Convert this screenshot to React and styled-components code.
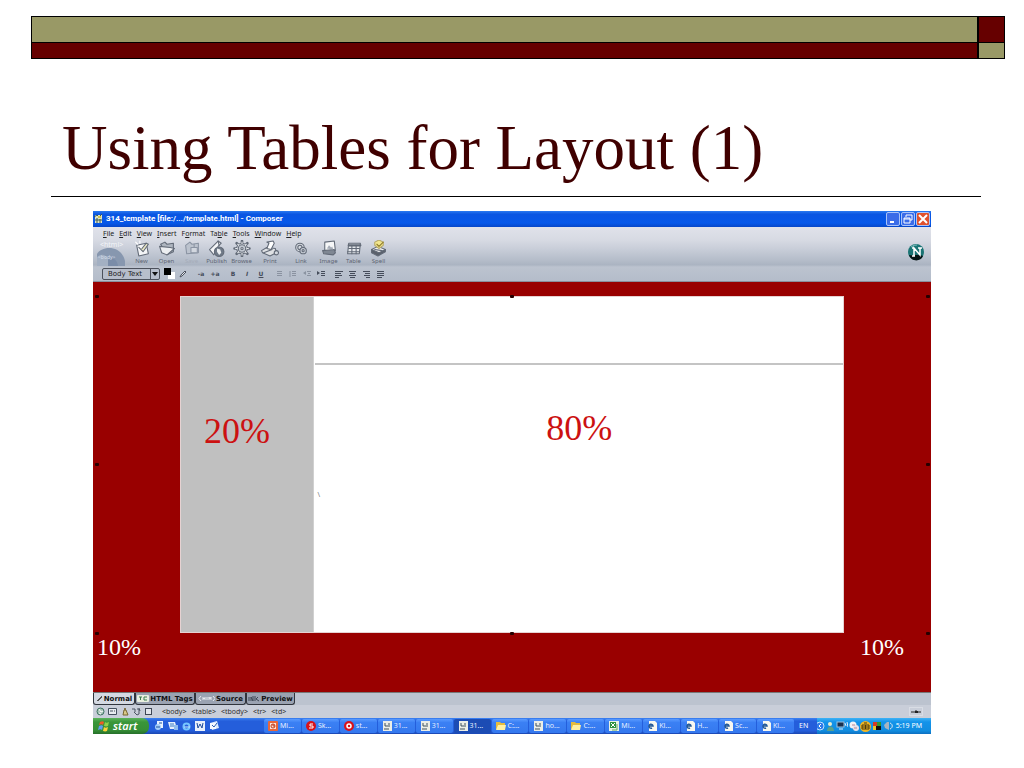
import React from "react";
import styled, { createGlobalStyle, css } from "styled-components";

const serif = '"Liberation Serif", "Times New Roman", serif';
const ui = '"Noto Sans", Tahoma, sans-serif';
const wide = '"DejaVu Sans", Verdana, sans-serif';

const Global = createGlobalStyle`
  * { box-sizing: border-box; }
  body { margin: 0; background: #fff; font-family: ${ui}; }
  button, select { margin: 0; padding: 0; border: 0; background: none; font: inherit; color: inherit; }
`;

const Slide = styled.main`
  padding: 16px 0 34px;
`;

const Banner = styled.div`
  display: grid;
  grid-template-columns: 1fr 25px;
  grid-template-rows: 25px 15px;
  gap: 1px 2px;
  margin: 0 19px 0 31px;
  padding: 1px;
  background: #000;
`;

const Swatch = styled.div`
  background: ${(p) => (p.$olive ? "#999966" : "#660000")};
`;

const Title = styled.h1`
  margin: 0 43px 0 51px;
  padding: 52px 11px 11px;
  border-bottom: 1px solid #000;
  font: 400 63px/74px ${serif};
  color: #400000;
  white-space: nowrap;
`;

const Composer = styled.section`
  margin: 14px 93px 0;
  overflow: hidden;
`;

const TitleBar = styled.header`
  display: flex;
  align-items: center;
  height: 16px;
  padding: 0 1px;
  gap: 3px;
  background: linear-gradient(#2a7af0, #0a55e2 20%, #0558ea 75%, #0646c8);
  color: #fff;
`;

const WindowTitle = styled.h2`
  flex: 1;
  margin: 0;
  font: 700 8px/14px Roboto, ${ui};
  white-space: nowrap;
`;

const WinButton = styled.button`
  display: grid;
  place-items: center;
  width: 14px;
  height: 14px;
  margin-left: -2px;
  border: 1px solid #a9c3f8;
  border-radius: 2px;
  background: ${(p) => (p.$close ? "#e0512c" : "#3b6ce8")};
`;

const Chrome = styled.div`
  background: linear-gradient(#e0e2ea, #d7dae3 24%, #c9ced9 40%, #b4bcc9 62%, #abb4c2 70%, #bcc3cf 74%, #b4bcca 100%);
  border-bottom: 1px solid #8a8f9c;
`;

const MenuBar = styled.nav`
  display: flex;
  align-items: center;
  gap: 5px;
  height: 13px;
  padding-left: 10px;
  color: #222;
`;

const MenuItem = styled.button`
  font: 400 7px/12px ${ui};
`;

const Toolbar = styled.div`
  display: flex;
  align-items: stretch;
  height: 27px;
  padding-left: 3px;
  padding-right: 6px;
`;

const Brand = styled.div`
  width: 33px;
`;

const Tool = styled.button`
  display: flex;
  flex-direction: column;
  align-items: center;
  width: ${(p) => p.$width || 25}px;
  font: 400 6px/8px ${ui};
  color: ${(p) => (p.disabled ? "#a5acb9" : "#5d6472")};
`;

const Fill = styled.div`
  flex: 1;
`;

const FormatBar = styled.div`
  display: flex;
  align-items: center;
  gap: 4px;
  height: 14px;
  padding-left: 9px;
`;

const StyleSelect = styled.label`
  display: flex;
  align-items: center;
  width: 58px;
  height: 12px;
  border: 1px solid #4c515c;
  border-radius: 2px;
  background: #b7becb;
`;

const Select = styled.select`
  flex: 1;
  appearance: none;
  padding-left: 5px;
  font: 400 7px/10px ${wide};
  color: #222;
  outline: none;
`;

const Group = styled.div`
  display: flex;
`;

const FormatButton = styled.button`
  display: grid;
  place-items: center;
  width: ${(p) => p.$width || 14}px;
  height: 12px;
  color: ${(p) => (p.$dim ? "#8a92a0" : "#454c5a")};
  font: ${(p) => (p.$italic ? "italic" : "normal")} 700 6px/10px ${wide};
  text-decoration: ${(p) => (p.$underline ? "underline" : "none")};
`;

const Canvas = styled.div`
  position: relative;
  display: flex;
  flex-direction: column;
  height: 410px;
  padding-top: 14px;
  background: #990000;
`;

const PageGrid = styled.div`
  display: grid;
  grid-template-columns: 1fr 4fr;
  height: 337px;
  margin: 0 87px;
  border: 1px solid #e6d2d2;
  background: #fff;
  font: 400 36px/40px ${serif};
  color: #cc1111;
`;

const SideCell = styled.div`
  padding: 114px 0 0 23px;
  background: #c0c0c0;
`;

const MainCells = styled.div`
  display: grid;
  grid-template-rows: 68px 1fr;
  padding-left: 1px;
  border-left: 1px solid #d0d0d0;
`;

const TopCell = styled.div`
  border-bottom: 2px solid #c4c4c4;
`;

const BodyCell = styled.div`
  padding-top: 43px;
  text-align: center;
`;

const Stray = styled.p`
  margin: 42px 0 0 2px;
  font: 400 7px/10px ${ui};
  color: #777;
  text-align: left;
`;

const Margins = styled.div`
  display: flex;
  justify-content: space-between;
  padding: 0 27px 0 4px;
  font: 400 24px/28px ${serif};
  color: #fff;
`;

const Handle = styled.span`
  position: absolute;
  left: ${(p) => p.$x};
  top: ${(p) => p.$y}px;
  width: 4px;
  height: 3px;
  border-radius: 1px;
  background: #260000;
`;

const Tabs = styled.div`
  display: flex;
  height: 13px;
  background: #bcc3cf;
  border-top: 1px solid #777;
`;

const Tab = styled.button`
  display: flex;
  align-items: center;
  justify-content: center;
  gap: 1px;
  width: ${(p) => p.$width}px;
  height: 12px;
  border: 1px solid #30343c;
  border-top: 0;
  border-radius: 0 0 3px 3px;
  background: ${(p) => (p.$active ? "#d4d9e2" : "#9aa2b1")};
  font: 700 7px/10px ${wide};
  color: #111;
  white-space: nowrap;
`;

const StatusBar = styled.footer`
  display: flex;
  align-items: center;
  height: 13px;
  padding: 0 8px 0 1px;
  background: #c9ced9;
  color: #333;
  font: 400 7px/12px ${ui};
`;

const Crumbs = styled.div`
  display: flex;
  flex: 1;
  gap: 5px;
  padding-left: 8px;
`;

const StatusButton = styled.button`
  display: grid;
  place-items: center;
  width: 12px;
  height: 12px;
`;

const TaskBar = styled.footer`
  display: flex;
  align-items: stretch;
  height: 16px;
  background: linear-gradient(#3c82f2, #245edb 20%, #245edb 80%, #1b46b0);
  color: #fff;
  font: 400 7px/14px ${ui};
`;

const Start = styled.button`
  display: flex;
  align-items: center;
  gap: 3px;
  width: 56px;
  padding-left: 5px;
  border-radius: 0 7px 7px 0;
  background: linear-gradient(#5cb35c, #3a963a 25%, #368f36 75%, #26702a);
  font: italic 600 11px/14px ${ui};
`;

const Quick = styled.div`
  display: flex;
  align-items: center;
  gap: 4px;
  width: 115px;
  padding-left: 5px;
`;

const Tasks = styled.div`
  display: flex;
  flex: 1;
`;

const Task = styled.button`
  display: flex;
  flex: 1;
  align-items: center;
  gap: 2px;
  min-width: 0;
  margin: 1px 1px 1px 0;
  padding-left: 4px;
  border-radius: 2px;
  white-space: nowrap;
  color: #e6efff;
  ${(p) =>
    p.$active
      ? css`background: #1c4cb4;`
      : css`background: linear-gradient(#5a9bff, #3b80f4 25%, #3478ee);`}
`;

const Lang = styled.div`
  display: flex;
  align-items: center;
  width: 22px;
  padding-left: 4px;
`;

const Tray = styled.div`
  display: flex;
  align-items: center;
  gap: 1px;
  width: 114px;
  background: linear-gradient(#3fb2f5, #1393ea 25%, #118cdf 80%, #0e6fc0);
  white-space: nowrap;
`;

const Time = styled.time`
  flex: 1;
  padding-right: 9px;
  text-align: right;
`;

function Svg({ w, h = w, vb, children }) {
  return (
    <svg width={w} height={h} viewBox={vb || `0 0 ${w} ${h}`} fill="none" aria-hidden="true">
      {children}
    </svg>
  );
}

const line = { stroke: "#626a77", strokeWidth: 1, strokeLinejoin: "round", strokeLinecap: "round" };

const toolArt = {
  New: (
    <g {...line}>
      <path d="M3 5l9-2 2 10-9 2z" fill="#f4f5f7" />
      <path d="M5 7l4 4 5-7-2-1-4 5" fill="#e9e6c4" />
      <path d="M2 2l2 2M6 1v2" stroke="#fff" />
    </g>
  ),
  Open: (
    <g {...line}>
      <path d="M2 4l4-2 2 2 6-1v8l-6 3z" fill="#aeb5bf" />
      <path d="M1 6l10 1 4 1-7 6-5-2z" fill="#eceef1" />
    </g>
  ),
  Save: (
    <g {...line} stroke="#8b94a3">
      <path d="M2 5l4-3 2 2 6-1v9l-11 1z" fill="#bcc3ce" />
      <path d="M7 7h6v5H7zM10 4v3" fill="#d2d7df" />
    </g>
  ),
  Publish: (
    <g {...line}>
      <path d="M1 9L9 1l3 2-3 3-4 8z" fill="#f4f5f7" />
      <path d="M9 1l1 4" />
      <circle cx="10" cy="11" r="4.500" fill="#6f7987" />
      <path d="M8 8l3 1 1 3-2 2-2-3z" fill="#e9ecef" stroke="none" />
    </g>
  ),
  Browse: (
    <g {...line}>
      <path d="M8 1v14M1 8h14M3 3l10 10M13 3L3 13" strokeWidth="2.500" />
      <circle cx="8" cy="8" r="5" fill="#e6e9ed" />
      <path d="M8 2v12M2 8h12M4 4l8 8M12 4l-8 8" stroke="#e6e9ed" />
      <circle cx="8" cy="8" r="3.500" fill="#c2c8d1" />
      <circle cx="8" cy="8" r="1" fill="#fff" />
    </g>
  ),
  Print: (
    <g {...line}>
      <path d="M0 10l5-3 8 1 1 4-6 3-7-3z" fill="#dfe1e4" />
      <path d="M5 2l6-1 1 2-3 6-4-1 2-5z" fill="#fff" />
      <path d="M2 12l8-3" />
      <circle cx="14" cy="12" r="2" fill="#d3d8df" />
    </g>
  ),
  Link: (
    <g {...line}>
      <circle cx="7" cy="7" r="4" fill="#d6dae1" />
      <circle cx="7" cy="7" r="2" />
      <circle cx="10" cy="10" r="3" fill="#c9ced7" />
      <circle cx="10" cy="10" r="1" />
    </g>
  ),
  Image: (
    <g {...line}>
      <path d="M4 2l9-1 1 9-10 1z" fill="#f6f7f8" />
      <path d="M2 10l11-1 1 3-2 2-9-1z" fill="#7f8793" />
      <path d="M6 8l2-3 2 2 1-1 1 3z" fill="#a5acb7" stroke="none" />
    </g>
  ),
  Table: (
    <g {...line}>
      <path d="M3 3h11l-1 10H2z" fill="#e5e8ec" />
      <path d="M3 5h11" strokeWidth="2" />
      <path d="M3 8h10M2 11h11M6 5v8M10 5v8" />
    </g>
  ),
  Spell: (
    <g {...line}>
      <path d="M1 9l6-3 7 3-6 5z" fill="#f0f0f0" />
      <path d="M1 9v3l6 3 7-4V9l-6 3z" fill="#5b616b" />
      <path d="M4 9l7 1" />
      <path d="M4 2l4-2 4 2v3L8 8 4 5z" fill="#f2e68d" stroke="#b5a867" />
      <path d="M6 4l2 2 4-4" stroke="#8d7b2b" />
    </g>
  ),
};

const tools = [
  ["New"], ["Open"], ["Save"], ["Publish"], ["Browse"],
  ["Print", 32], ["Link", 30], ["Image"], ["Table"], ["Spell"],
];

const menus = [
  ["", "F", "ile"], ["", "E", "dit"], ["", "V", "iew"], ["", "I", "nsert"], ["F", "o", "rmat"],
  ["Ta", "b", "le"], ["", "T", "ools"], ["", "W", "indow"], ["", "H", "elp"],
];

function Lines({ rows, numbered, arrow }) {
  return (
    <Svg w={8}>
      {rows.map(([x, w], i) => (
        <rect key={i} x={x} y={1 + i * 2} width={w} height="1" fill="currentColor" />
      ))}
      {numbered && <path d="M1 1v6" stroke="currentColor" />}
      {arrow && <path d={arrow} fill="currentColor" />}
    </Svg>
  );
}

const listGroup = [
  ["Bulleted list", true, { rows: [[2, 5], [2, 5], [2, 5]] }],
  ["Numbered list", true, { rows: [[3, 4], [3, 4], [3, 4]], numbered: true }],
  ["Outdent", true, { rows: [[4, 4], [5, 2], [4, 4]], arrow: "M0 3l3-2v4z" }],
  ["Indent", false, { rows: [[4, 4], [4, 4], [4, 4]], arrow: "M3 3l-3-2v4z" }],
];

const alignGroup = [
  ["Align left", [[0, 8], [0, 6], [0, 7], [0, 4]]],
  ["Align center", [[0, 7], [1, 5], [0, 7], [1, 5]]],
  ["Align right", [[0, 7], [2, 5], [1, 6], [3, 4]]],
  ["Justify", [[0, 7], [0, 7], [0, 7], [0, 5]]],
];

function AppIcon({ kind }) {
  const art = {
    ppt: (
      <>
        <rect width="10" height="10" rx="1" fill="#e8673a" />
        <path d="M2 2h6v6H2z" fill="#fbe3d5" />
        <circle cx="5" cy="5" r="2" stroke="#c43d1b" />
        <path d="M5 3v2h2" stroke="#c43d1b" />
      </>
    ),
    skype: (
      <>
        <circle cx="5" cy="5" r="5" fill="#d9121b" />
        <path d="M7 3H4v2h3v2H3" stroke="#fff" />
      </>
    ),
    red: (
      <>
        <circle cx="5" cy="5" r="5" fill="#d9121b" />
        <circle cx="5" cy="5" r="2" stroke="#fff" strokeWidth="1.500" />
      </>
    ),
    doc: (
      <>
        <rect x="1" width="9" height="10" fill="#eceee6" />
        <path d="M3 2v3h3M7 2v4M2 8h5" stroke="#3e5261" />
      </>
    ),
    folder: (
      <>
        <path d="M0 1h4l1 1h4v6H0z" fill="#e5bb3d" />
        <path d="M2 4h8L9 9H0z" fill="#fff0a3" />
      </>
    ),
    xls: (
      <>
        <rect width="10" height="10" fill="#e8f2e4" />
        <path d="M1 1h6v6H1z" fill="#2e9140" />
        <path d="M2 2l4 4M6 2L2 6" stroke="#fff" />
        <path d="M8 3v6H3" stroke="#67a967" />
      </>
    ),
    ie: (
      <>
        <path d="M2 0h6l2 2v8H2z" fill="#f8f8f0" />
        <path d="M2 5h4a2 2 0 1 0-1 2" stroke="#245a98" strokeWidth="1.500" />
      </>
    ),
  }[kind];
  return <Svg w={10}>{art}</Svg>;
}

const tasks = [
  ["ppt", "Mi..."], ["skype", "Sk..."], ["red", "st..."], ["doc", "31..."], ["doc", "31..."],
  ["doc", "31...", true], ["folder", "C:..."], ["doc", "ho..."], ["folder", "C:..."],
  ["xls", "Mi..."], ["ie", "Kl..."], ["ie", "H..."], ["ie", "Sc..."], ["ie", "Kl..."],
];

const handles = [
  ["2px", 13], ["calc(50% - 2px)", 13], ["calc(100% - 5px)", 13],
  ["2px", 181], ["calc(100% - 5px)", 181],
  ["2px", 350], ["calc(50% - 2px)", 350], ["calc(100% - 5px)", 350],
];

export default function App() {
  return (
    <Slide>
      <Global />
      <Banner>
        <Swatch $olive />
        <Swatch />
        <Swatch />
        <Swatch $olive />
      </Banner>
      <Title>Using Tables for Layout (1)</Title>

      <Composer>
        <TitleBar>
          <Svg w={9} h={10}>
            <rect x="1" y="1" width="7" height="8" fill="#dde3c8" />
            <path d="M0 3l3-2 2 2 3-3M1 6h7M3 4v5M6 5v4" stroke="#3d5b50" />
            <path d="M4 2h3v2H4z" fill="#d7c64b" />
          </Svg>
          <WindowTitle>314_template [file:/.../template.html] - Composer</WindowTitle>
          <WinButton aria-label="Minimize">
            <Svg w={10}><path d="M2 8h4" stroke="#fff" strokeWidth="2" /></Svg>
          </WinButton>
          <WinButton aria-label="Restore">
            <Svg w={10}><path d="M3 3V1h6v5H7M1 4h6v5H1z M1 5h6" stroke="#fff" /></Svg>
          </WinButton>
          <WinButton $close aria-label="Close">
            <Svg w={10}><path d="M1 1l8 8M9 1L1 9" stroke="#fff" strokeWidth="2" /></Svg>
          </WinButton>
        </TitleBar>

        <Chrome>
          <MenuBar>
            {menus.map(([a, key, b]) => (
              <MenuItem key={a + key + b}>{a}<u>{key}</u>{b}</MenuItem>
            ))}
          </MenuBar>
          <Toolbar>
            <Brand>
              <Svg w={30} h={27}>
                <path d="M1 26V14C5 6 25 4 29 21v5z" fill="#8797af" />
                <path d="M12 26v-6c6-3 9 0 10 6z" fill="#7a8ca8" />
                <path d="M1 26v-9c5-4 9-2 11 2v7z" fill="#a3b0c3" />
                <text x="4" y="7" fontFamily={ui} fontSize="7" fill="#f2f4f8">&lt;html&gt;</text>
                <text x="2" y="19" fontFamily={ui} fontSize="5" fill="#d6deea">&lt;body&gt;</text>
              </Svg>
            </Brand>
            {tools.map(([name, width]) => (
              <Tool key={name} $width={width} disabled={name === "Save"}>
                <Svg w={18} h={17} vb="0 0 16 16">{toolArt[name]}</Svg>
                {name}
              </Tool>
            ))}
            <Fill />
            <Svg w={17} h={25}>
              <circle cx="8" cy="12" r="8" fill="#1a7474" />
              <path d="M1 15c4 1 10-1 14 1-2 6-12 6-14-1z" fill="#051414" />
              <path d="M3 7a8 8 0 0 1 6-2" stroke="#7fc0c0" />
              <path d="M4 16h3M6 16V8l6 7V8M4 8h2M10 8h4" stroke="#fff" strokeWidth="1.500" />
            </Svg>
          </Toolbar>
          <FormatBar>
            <StyleSelect>
              <Select aria-label="Paragraph style" defaultValue="body">
                <option value="body">Body Text</option>
              </Select>
              <Svg w={9} h={10}>
                <path d="M0.500 0v10" stroke="#4c515c" />
                <path d="M2 3h6L5 7z" fill="#111" />
              </Svg>
            </StyleSelect>
            <Group>
              <FormatButton $width={12} aria-label="Text color">
                <Svg w={12}>
                  <rect x="4" y="4" width="7" height="7" fill="#fff" />
                  <rect width="7" height="7" fill="#000" />
                </Svg>
              </FormatButton>
              <FormatButton aria-label="Highlight">
                <Svg w={8}><path d="M1 7l1-2 4-4 1 1-4 4z" stroke="#4c525f" fill="#e9ebef" /></Svg>
              </FormatButton>
            </Group>
            <Group>
              <FormatButton>-a</FormatButton>
              <FormatButton>+a</FormatButton>
            </Group>
            <Group>
              <FormatButton>B</FormatButton>
              <FormatButton $italic>I</FormatButton>
              <FormatButton $underline>U</FormatButton>
            </Group>
            <Group>
              {listGroup.map(([name, dim, props]) => (
                <FormatButton key={name} $dim={dim} aria-label={name}><Lines {...props} /></FormatButton>
              ))}
            </Group>
            <Group>
              {alignGroup.map(([name, rows]) => (
                <FormatButton key={name} aria-label={name}><Lines rows={rows} /></FormatButton>
              ))}
            </Group>
          </FormatBar>
        </Chrome>

        <Canvas>
          <PageGrid>
            <SideCell>20%</SideCell>
            <MainCells>
              <TopCell />
              <BodyCell>
                80%
                <Stray>\</Stray>
              </BodyCell>
            </MainCells>
          </PageGrid>
          <Margins>
            <span>10%</span>
            <span>10%</span>
          </Margins>
          {handles.map(([x, y]) => <Handle key={x + y} $x={x} $y={y} />)}
        </Canvas>

        <Tabs>
          <Tab $active $width={42}>
            <Svg w={7}><path d="M1 6l5-5M2 6l4-4" stroke="#555" /></Svg>
            Normal
          </Tab>
          <Tab $width={60}>
            <Svg w={12} h={7}>
              <rect width="12" height="7" rx="1" fill="#e8efe0" />
              <path d="M2 2h3M3.500 2v3M7 2h3M7 2v3h3" stroke="#3c7d4d" />
            </Svg>
            HTML Tags
          </Tab>
          <Tab $width={51}>
            <Svg w={17} h={7}><path d="M3 1L1 3.500 3 6M5 2v3M5 3.500h2M7 2v3M9 2v3M11 5V2l1 2 1-2v3M15 1l2 2.500L15 6" stroke="#e8ebf0" /></Svg>
            Source
          </Tab>
          <Tab $width={49}>
            <Svg w={12} h={7}><path d="M1 2v4M3 6V2l2 4V1M7 1v5M10 2L8 4l3 2" stroke="#3d4654" /></Svg>
            Preview
          </Tab>
        </Tabs>

        <StatusBar>
          <StatusButton aria-label="Navigator">
            <Svg w={9}><circle cx="4.500" cy="4.500" r="3.500" fill="#a9c3b8" stroke="#3e7362" /><path d="M3 2l2 3 2-1M3 6l2 1" stroke="#fff" /></Svg>
          </StatusButton>
          <StatusButton aria-label="Mail">
            <Svg w={9}><path d="M0.500 1.500h8v6h-8zM2 4h3M6 4h1" stroke="#44505f" fill="#e9ecf0" /></Svg>
          </StatusButton>
          <StatusButton aria-label="Instant messenger">
            <Svg w={9}><circle cx="5" cy="2" r="1" fill="#6c5825" /><path d="M4 3l-1 5h5L6 3z" stroke="#77652f" fill="#d8c988" /></Svg>
          </StatusButton>
          <StatusButton aria-label="Composer">
            <Svg w={10} h={9}><path d="M1 2h3v3M3 5l3 3 2-1V2H6M8 1l1 3" stroke="#4b5361" /></Svg>
          </StatusButton>
          <StatusButton aria-label="Address book">
            <Svg w={9}><rect x="1.500" y="1.500" width="6" height="6" stroke="#3e4654" fill="#e2e5eb" /></Svg>
          </StatusButton>
          <Crumbs>
            <span>&lt;body&gt;</span><span>&lt;table&gt;</span><span>&lt;tbody&gt;</span><span>&lt;tr&gt;</span><span>&lt;td&gt;</span>
          </Crumbs>
          <Svg w={14} h={9}>
            <rect x="0.500" y="0.500" width="13" height="8" stroke="#d9dde5" />
            <path d="M2 5h10M7 3v3" stroke="#222" />
            <path d="M6 4h3v2H6z" fill="#222" />
          </Svg>
        </StatusBar>

        <TaskBar>
          <Start>
            <Svg w={12}>
              <path d="M2 2c2-1 3-1 4 0L5 5C4 4 3 4 1 5z" fill="#f05a28" />
              <path d="M7 2c1 1 2 1 4 0l-1 4c-2 1-3 0-4 0z" fill="#8fd14a" />
              <path d="M1 6c2-1 3-1 4 0l-1 4C3 9 2 9 0 10z" fill="#5f9cf5" />
              <path d="M6 7c1 1 2 1 4 0l-1 4c-2 1-3 0-4 0z" fill="#fbd03a" />
            </Svg>
            start
          </Start>
          <Quick>
            <Svg w={10}><path d="M3 0h6v7H3z" fill="#eaf3ff" /><circle cx="4" cy="6" r="3" fill="#a6d0fa" /><path d="M2 6h4M5 2h3" stroke="#21549e" /></Svg>
            <Svg w={10}><path d="M0 1h7l2 7H2z" fill="#e4effc" /><path d="M2 3h4M2 5h5" stroke="#3b7dc4" /><path d="M6 4h4v5H6z" fill="#8fbcee" /></Svg>
            <Svg w={9}><circle cx="4.500" cy="4.500" r="3" stroke="#75c5ff" strokeWidth="2" /><path d="M2 5h6" stroke="#c9ecff" /></Svg>
            <Svg w={10}><rect width="10" height="10" fill="#e9f0fb" /><path d="M2 2l1 5 2-4 2 4 1-5" stroke="#1c4a9c" /></Svg>
            <Svg w={10}><path d="M1 2l7-2 2 7-7 2z" fill="#dbe9fb" /><path d="M1 2h6v6H1z" fill="#f6f8ff" /><path d="M3 4l2 2 3-4" stroke="#285eb2" /></Svg>
          </Quick>
          <Tasks>
            {tasks.map(([kind, label, active], i) => (
              <Task key={i} $active={active}><AppIcon kind={kind} />{label}</Task>
            ))}
          </Tasks>
          <Lang>EN</Lang>
          <Tray>
            <Svg w={8} h={10}><circle cx="3" cy="5" r="4" fill="#2f7be8" stroke="#bfe0ff" /><path d="M4 3L2 5l2 2" stroke="#fff" /></Svg>
            <Svg w={9} h={11}><circle cx="4" cy="3" r="2" fill="#e7edd2" /><path d="M1 10c0-6 7-6 7 0z" fill="#5ba08c" /></Svg>
            <Svg w={12} h={10}><rect x="1" y="1" width="7" height="5" fill="#19304f" stroke="#9ec2de" /><path d="M3 8h4M9 2l1 3M11 1l1 5" stroke="#dfeeff" /></Svg>
            <Svg w={10}><circle cx="4" cy="4" r="3.500" fill="#f0f1f5" /><circle cx="7" cy="7" r="3" fill="#e5e3ec" /><path d="M3 4h3M5 7h3" stroke="#b98593" /></Svg>
            <Svg w={11}><circle cx="5.500" cy="5.500" r="5.500" fill="#efb523" /><path d="M2 4h7v4H2zM5.500 4v4M2 6h7M4 2h3" stroke="#4b3a0c" /></Svg>
            <Svg w={11} h={10}><path d="M1 1h4v4H1z" fill="#d43a26" /><path d="M5 1h4v4H5z" fill="#35962f" /><path d="M1 5h4v4H1z" fill="#e8c52c" /><path d="M4 5h5v4H4z" fill="#111" /></Svg>
            <Svg w={9} h={10}><path d="M0 4l3-3h2v8L1 7z" fill="#a8b4c0" /><path d="M6 2c3 1 3 5 0 6" stroke="#dce6f0" /></Svg>
            <Time>5:19 PM</Time>
          </Tray>
        </TaskBar>
      </Composer>
    </Slide>
  );
}
